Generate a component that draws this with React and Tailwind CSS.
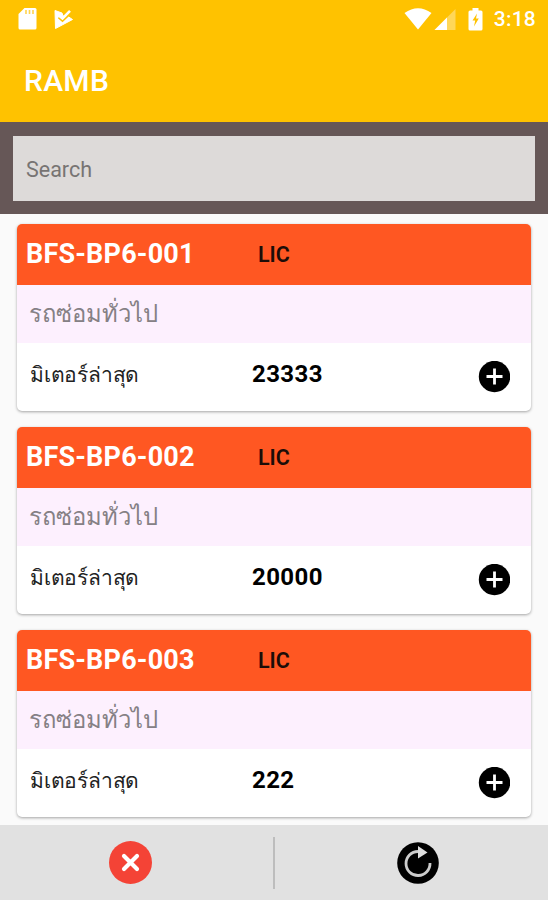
import React from "react";

const vehicles = [
  { id: "BFS-BP6-001", license: "LIC", type: "รถซ่อมทั่วไป", meter: 23333 },
  { id: "BFS-BP6-002", license: "LIC", type: "รถซ่อมทั่วไป", meter: 20000 },
  { id: "BFS-BP6-003", license: "LIC", type: "รถซ่อมทั่วไป", meter: 222 },
];

const StatusBar = () => (
  <div className="flex h-[38px] items-center pl-[18px] pr-3 text-white">
    <svg width="19" height="22" viewBox="0 0 19 22" className="shrink-0">
      <path
        fill="#fff"
        d="M6.5 0H17a1.5 1.5 0 0 1 1.5 1.5v18.500A1.5 1.5 0 0 1 17 21.500H2a1.5 1.5 0 0 1-1.5-1.5V6z"
      />
      <path d="M8 2v4M11.500 2v4M15 2v4" stroke="#ffc200" strokeOpacity="0.7" strokeWidth="1.6" />
    </svg>
    <svg width="20" height="21" viewBox="0 0 20 21" className="ml-[17px] shrink-0">
      <path
        fill="#fff"
        stroke="#fff"
        strokeLinejoin="round"
        d="M1 1.500 8 4 9 7l5 .500 4.500 3L1.500 19.500z"
      />
      <path d="M4.500 8.500 8.500 12 18 3.200" fill="none" stroke="#ffc200" strokeWidth="1.8" />
      <path d="M5.500 7 8.500 9.500 16 1.800" fill="none" stroke="#fff" strokeWidth="2.6" />
    </svg>
    <div className="ml-auto flex items-center">
      <svg width="28" height="22" viewBox="0 0 28 22">
        <path fill="#fff" d="M0.5 5Q14-4.5 27.5 5L14 21.5z" />
      </svg>
      <svg width="22" height="21" viewBox="0 0 22 21" className="ml-[2px]">
        <path fill="#fff" fillOpacity="0.35" d="M21.5 0v21H0.5z" />
        <path fill="#fff" d="M13 8.500V21H0.5z" />
      </svg>
      <svg width="15" height="23" viewBox="0 0 15 23" className="ml-3">
        <path
          fill="#fff"
          d="M4.5 0h6v2.500H13A1.5 1.5 0 0 1 14.5 4v17A1.5 1.5 0 0 1 13 22.500H2A1.5 1.5 0 0 1 0.5 21V4A1.5 1.5 0 0 1 2 2.500h2.500z"
        />
        <path fill="#ffc200" d="M9 5.500 4.500 12.500h2.700L6 18.500l4.800-8H8z" />
      </svg>
      <span className="ml-[11px] text-[21px] leading-none font-medium tracking-[0.2px]">
        3:18
      </span>
    </div>
  </div>
);

const VehicleCard = ({ vehicle }) => (
  <div className="h-[187px] shrink-0 overflow-hidden rounded-[5px] bg-white shadow-[0_1px_3px_rgba(0,0,0,0.35)]">
    <div className="flex h-[61px] items-center bg-[#ff5722] pl-[9px]">
      <h2 className="w-[232px] text-[27px] leading-[59px] font-bold tracking-[0.2px] text-white">
        {vehicle.id}
      </h2>
      <span className="pt-px text-[21.5px] leading-none font-semibold text-[#1c0d08]">
        {vehicle.license}
      </span>
    </div>
    <div className="flex h-[58px] items-center bg-[#fdf0fe] pt-0.5 pl-3 text-[23.8px] leading-none text-[#858085]">
      {vehicle.type}
    </div>
    <div className="flex h-[68px] items-center pr-[21px] pl-[13px]">
      <span className="w-[222px] pb-1 text-[21px] leading-none tracking-[-0.2px] text-[#222]">
        มิเตอร์ล่าสุด
      </span>
      <span className="pb-[7px] text-[24px] leading-none font-bold tracking-[0.4px] text-black">
        {vehicle.meter}
      </span>
      <button className="ml-auto">
        <svg width="32" height="32" viewBox="0 0 32 32">
          <circle cx="16.5" cy="15.5" r="15.7" fill="#000" />
          <path d="M16.5 7.500v16M8.500 15.500h16" stroke="#fff" strokeWidth="2.8" />
        </svg>
      </button>
    </div>
  </div>
);

const Footer = () => (
  <div className="flex h-[75px] shrink-0 items-center bg-[#e1e1e1]">
    <button className="flex flex-1 justify-center pr-[12px]">
      <svg width="43" height="43" viewBox="0 0 43 43">
        <circle cx="21.5" cy="21.5" r="21.5" fill="#f44336" />
        <path
          d="m15 15 13 13M28 15 15 28"
          stroke="#fff"
          strokeWidth="4.2"
          strokeLinecap="round"
        />
      </svg>
    </button>
    <div className="ml-px h-[52px] w-[2px] bg-[#bdbdbd]" />
    <button className="flex flex-1 justify-center pl-[13px]">
      <svg width="42" height="42" viewBox="0 0 42 42">
        <circle cx="21" cy="21" r="20.8" fill="#000" />
        <path
          d="M33 21A12 12 0 1 1 21 9.500"
          fill="none"
          stroke="#ccc"
          strokeWidth="2.8"
        />
        <path d="M21 4v12.500l9.500-6z" fill="#ddd" />
      </svg>
    </button>
  </div>
);

const App = () => {
  return (
    <div className="flex h-[900px] w-[548px] flex-col overflow-hidden bg-[#fafafa] font-['Roboto','Noto_Sans',sans-serif]">
      <header className="h-[122px] shrink-0 bg-[#ffc200]">
        <StatusBar />
        <h1 className="pl-6 text-[30px] leading-[85px] font-medium tracking-[0.3px] text-white">
          RAMB
        </h1>
      </header>
      <div className="h-[92px] shrink-0 bg-[#665757] px-[13px] pt-[14px]">
        <input
          type="text"
          placeholder="Search"
          className="h-[65px] w-full bg-[#dddad9] px-[13px] pt-px text-[21.5px] outline-none placeholder:text-[#777473]"
        />
      </div>
      <main className="flex min-h-0 flex-1 flex-col gap-4 overflow-hidden pt-[10px] pr-[17px] pl-[17px]">
        {vehicles.map((vehicle) => (
          <VehicleCard key={vehicle.id} vehicle={vehicle} />
        ))}
      </main>
      <Footer />
    </div>
  );
};

export default App;
